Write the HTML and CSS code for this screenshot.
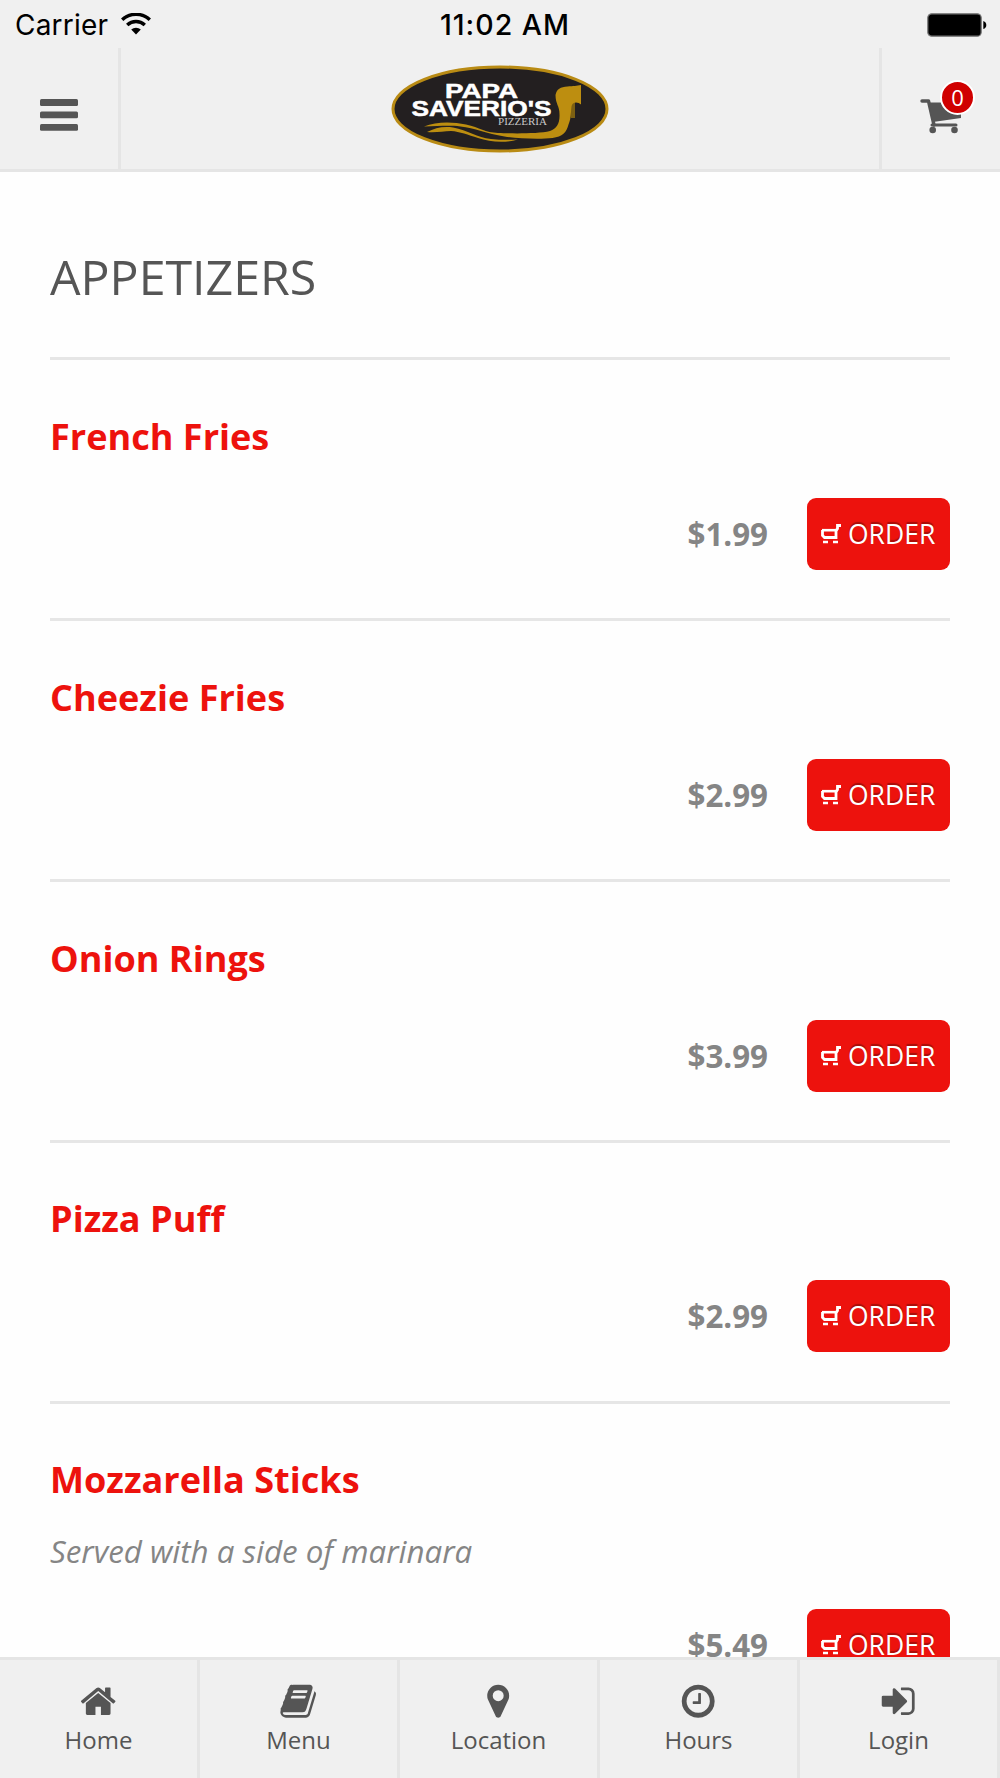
FILE: index.html
```html
<!DOCTYPE html>
<html lang="en">
<head>
    <meta charset="UTF-8">
    <meta name="viewport" content="width=device-width, initial-scale=1.0">
    <title>Papa Saverio's Pizzeria - Appetizers</title>
    <link rel="stylesheet" href="styles.css">
</head>
<body>
    <svg class="sprite" width="0" height="0">
        <symbol id="order-cart" viewBox="0 0 20 20">
            <path d="M1.500 6v5.500l2 2H15V7l1.500-2.500V1.500H20" fill="none" stroke="#fff" stroke-width="2.800"/>
            <path d="M1 6.200h14" stroke="#fff" stroke-width="2.600"/>
            <path d="M2 18h5M12 18h5" stroke="#fff" stroke-width="2.600"/>
        </symbol>
    </svg>

    <header class="top">
        <div class="status">
            <div class="status-left">
                <span class="carrier">Carrier</span>
                <svg class="wifi" width="30" height="22" viewBox="0 0 30 22">
                    <path d="M1.200 6.800a20 20 0 0 1 27.600 0M6.200 12a12.800 12.800 0 0 1 17.600 0" fill="none" stroke="#000" stroke-width="3.400"/>
                    <path d="M10.200 16.600a7 7 0 0 1 9.600 0L15 21.600z"/>
                </svg>
            </div>
            <span class="time">11:02 AM</span>
            <div class="status-right">
                <svg width="60" height="24" viewBox="0 0 60 24">
                    <rect x="0.800" y="0.800" width="53.400" height="22.400" rx="4" fill="#000" stroke="#777" stroke-width="1.200"/>
                    <path d="M56.300 8q3 1 3 4t-3 4z"/>
                </svg>
            </div>
        </div>
        <div class="bar">
            <a class="bar-button">
                <svg width="38" height="32" viewBox="0 0 38 32" fill="#555">
                    <rect y="0" width="38" height="7" rx="1.500"/>
                    <rect y="12.500" width="38" height="6.700" rx="1.500"/>
                    <rect y="25" width="38" height="6.700" rx="1.500"/>
                </svg>
            </a>
            <div class="logo">
                <svg width="218" height="88" viewBox="0 0 218 88">
                    <ellipse cx="109" cy="44" rx="107" ry="42" fill="#231f20" stroke="#b98b14" stroke-width="3"/>
                    <path d="M180 37h4v16h-4z" fill="#7d6012"/>
                    <path d="M33 61.500c12-5 28-5 42-2s19 8 32 8.500 40 1 52-2c7-2 10-8 9.500-17 0-8-4-10-4-19 1-6 5-8 12-8.500 6-.5 9-.5 13.500-1.500v19.500c-3-3-9-3-9.500 2-1 8 0 11-3 18-2 8-6 12-16 13.500-13 1.500-35 .5-48-1.500-18-3-30-8.500-44-10s-22 0-36.500 0z" fill="#bd8e10"/>
                    <path d="M36 67c8-4 16-6 26-4.500 15 3 24 10 38 11.500 9 1 18 1 27 .5-14 4-28 2.500-40-1.500-10-3-18-6.500-27-7-8 0-15 2-24 1z" fill="#bd8e10"/>
                    <g class="logo-name">
                        <text x="54" y="32.700" font-size="21" textLength="73" lengthAdjust="spacingAndGlyphs">PAPA</text>
                        <text x="20.500" y="50.800" font-size="21.500" textLength="140" lengthAdjust="spacingAndGlyphs">SAVERIO'S</text>
                    </g>
                    <text class="logo-sub" x="107" y="60.300" font-size="9.500" textLength="49" lengthAdjust="spacingAndGlyphs">PIZZERIA</text>
                </svg>
            </div>
            <a class="bar-button cart">
                <svg width="42" height="36" viewBox="0 0 42 36">
                    <path d="M2 2h6.500l5.500 24" fill="none" stroke="#555" stroke-width="3.400" stroke-linecap="round" stroke-linejoin="round"/>
                    <path d="M9 3.500h32V19L13 23z" fill="#555"/>
                    <path d="M12 26h24" stroke="#555" stroke-width="3" stroke-linecap="round"/>
                    <circle cx="12.700" cy="31" r="3.300" fill="#555"/>
                    <circle cx="34.500" cy="31" r="3.300" fill="#555"/>
                </svg>
                <span class="badge">0</span>
            </a>
        </div>
    </header>

    <main class="menu">
        <h1>APPETIZERS</h1>
        <section class="item">
            <h2>French Fries</h2>
            <div class="buy">
                <span class="price">$1.99</span>
                <a class="order"><svg width="20" height="20"><use href="#order-cart"/></svg><span>ORDER</span></a>
            </div>
        </section>
        <section class="item">
            <h2>Cheezie Fries</h2>
            <div class="buy">
                <span class="price">$2.99</span>
                <a class="order"><svg width="20" height="20"><use href="#order-cart"/></svg><span>ORDER</span></a>
            </div>
        </section>
        <section class="item">
            <h2>Onion Rings</h2>
            <div class="buy">
                <span class="price">$3.99</span>
                <a class="order"><svg width="20" height="20"><use href="#order-cart"/></svg><span>ORDER</span></a>
            </div>
        </section>
        <section class="item">
            <h2>Pizza Puff</h2>
            <div class="buy">
                <span class="price">$2.99</span>
                <a class="order"><svg width="20" height="20"><use href="#order-cart"/></svg><span>ORDER</span></a>
            </div>
        </section>
        <section class="item">
            <h2>Mozzarella Sticks</h2>
            <p>Served with a side of marinara</p>
            <div class="buy">
                <span class="price">$5.49</span>
                <a class="order"><svg width="20" height="20"><use href="#order-cart"/></svg><span>ORDER</span></a>
            </div>
        </section>
    </main>

    <nav class="tabs">
        <a class="tab">
            <svg viewBox="0 0 1792 1792"><path d="M1472 992v480q0 26-19 45t-45 19h-384v-384h-256v384h-384q-26 0-45-19t-19-45v-480q0-1 .5-3t.5-3l575-474 575 474q1 2 1 6zm223-69l-62 74q-8 9-21 11h-3q-13 0-21-7l-692-577-692 577q-12 8-24 7-13-2-21-11l-62-74q-8-10-7-23.5t11-21.5l719-599q32-26 76-26t76 26l244 204v-195q0-14 9-23t23-9h192q14 0 23 9t9 23v408l219 182q10 8 11 21.5t-7 23.5z"/></svg>
            <span>Home</span>
        </a>
        <a class="tab">
            <svg viewBox="0 0 1792 1792"><path d="M1703 478q40 57 18 129l-275 906q-19 64-76.5 107.500t-122.500 43.500h-923q-77 0-148.500-53.500t-99.500-131.500q-24-67-2-127 0-4 3-27t4-37q1-8-3-21.500t-3-19.500q2-11 8-21t16.500-23.500 16.500-23.500q23-38 45-91.500t30-91.500q3-10 .5-30t-.5-28q3-11 17-28t17-23q21-36 42-92t25-90q1-9-2.500-32t.5-28q4-13 22-30.500t22-22.500q19-26 42.500-84.500t27.500-96.500q1-8-3-25.500t-2-26.500q2-8 9-18t18-23 17-21q8-12 16.500-30.500t15-35 16-36 19.500-32 26.500-23.500 36-11.500 47.500 5.500l-1 3q38-9 51-9h761q74 0 114 56t18 130l-274 906q-36 119-71.500 153.500t-128.500 34.500h-869q-27 0-38 15-11 16-1 43 24 70 144 70h923q29 0 56-15.500t35-41.500l300-987q7-22 5-57 38 15 59 43zm-1064 2q-4 13 2 22.500t20 9.500h608q13 0 25.500-9.500t16.500-22.500l21-64q4-13-2-22.500t-20-9.500h-608q-13 0-25.500 9.500t-16.500 22.500zm-83 256q-4 13 2 22.500t20 9.500h608q13 0 25.500-9.500t16.500-22.500l21-64q4-13-2-22.500t-20-9.500h-608q-13 0-25.500 9.500t-16.500 22.500z"/></svg>
            <span>Menu</span>
        </a>
        <a class="tab">
            <svg viewBox="0 0 1792 1792"><path d="M1152 640q0-106-75-181t-181-75-181 75-75 181 75 181 181 75 181-75 75-181zm256 0q0 109-33 179l-364 774q-16 33-47.500 52t-67.500 19-67.500-19-46.500-52l-365-774q-33-70-33-179 0-212 150-362t362-150 362 150 150 362z"/></svg>
            <span>Location</span>
        </a>
        <a class="tab">
            <svg viewBox="0 0 1792 1792"><path d="M1024 544v448q0 14-9 23t-23 9h-320q-14 0-23-9t-9-23v-64q0-14 9-23t23-9h224v-352q0-14 9-23t23-9h64q14 0 23 9t9 23zm416 352q0-148-73-273t-198-198-273-73-273 73-198 198-73 273 73 273 198 198 273 73 273-73 198-198 73-273zm224 0q0 209-103 385.500t-279.500 279.500-385.500 103-385.500-103-279.500-279.500-103-385.500 103-385.500 279.500-279.500 385.500-103 385.500 103 279.500 279.500 103 385.500z"/></svg>
            <span>Hours</span>
        </a>
        <a class="tab">
            <svg viewBox="0 0 1792 1792"><path d="M1312 896q0 26-19 45l-544 544q-19 19-45 19t-45-19-19-45v-288h-448q-26 0-45-19t-19-45v-384q0-26 19-45t45-19h448v-288q0-26 19-45t45-19 45 19l544 544q19 19 19 45zm352-352v704q0 119-84.500 203.500t-203.500 84.500h-320q-13 0-22.500-9.500t-9.500-22.500q0-4-1-20t-.5-26.500 3-23.500 10-19.500 20.500-6.500h320q66 0 113-47t47-113v-704q0-66-47-113t-113-47h-312l-11.500-1-11.500-3-8-5.500-7-9-2-13.500q0-4-1-20t-.5-26.500 3-23.500 10-19.500 20.500-6.500h320q119 0 203.500 84.500t84.500 203.500z"/></svg>
            <span>Login</span>
        </a>
    </nav>
</body>
</html>
```

FILE: styles.css
```css
* {
    box-sizing: border-box;
}
body {
    display: flex;
    flex-direction: column;
    height: 1778px;
    margin: 0;
    overflow: hidden;
    font-family: "Open Sans", sans-serif;
    color: #555;
    background-color: #fefefe;
}
h1, h2, p {
    margin: 0;
}
svg {
    display: block;
    flex: none;
}
.sprite {
    position: absolute;
}

/* header */
.top {
    flex: none;
    height: 172px;
    background-color: #f0f0f0;
    border-bottom: 3px solid #e5e5e5;
}
.status {
    display: grid;
    grid-template-columns: 1fr auto 1fr;
    align-items: center;
    height: 48px;
    padding: 1px 13px 0 15px;
    font-family: Inter, sans-serif;
    font-size: 28px;
    line-height: 46px;
    color: #000;
}
.status-left {
    display: flex;
    align-items: center;
    gap: 13px;
}
.carrier {
    padding-top: 1px;
    letter-spacing: 0.2px;
}
.wifi {
    margin-bottom: 2px;
}
.time {
    padding: 1px 0 0 8px;
    font-weight: 500;
    font-size: 28.500px;
    letter-spacing: 1px;
}
.status-right {
    display: flex;
    justify-content: flex-end;
}
.bar {
    display: flex;
    height: 121px;
}
.bar-button {
    width: 121px;
    padding: 51px 0 0 40px;
    border-right: 3px solid #e5e5e5;
}
.logo {
    flex: 1;
    display: flex;
    justify-content: center;
    padding-top: 17px;
}
.logo-name {
    font-family: "Liberation Sans", sans-serif;
    font-weight: bold;
    fill: #fff;
    stroke: #fff;
    stroke-width: 0.5px;
}
.logo-sub {
    font-family: "Liberation Serif", serif;
    fill: #c8c8c8;
}
.cart {
    position: relative;
    border-right: none;
    border-left: 3px solid #e5e5e5;
    padding-left: 38px;
}
.badge {
    position: absolute;
    left: 58px;
    top: 32px;
    width: 35px;
    height: 35px;
    border: 2px solid #fff;
    border-radius: 50%;
    background-color: #d00000;
    color: #fff;
    font-size: 22px;
    line-height: 31px;
    text-align: center;
}

/* menu list */
.menu {
    flex: 1;
    min-height: 0;
    overflow: hidden;
    padding: 0 50px;
}
h1 {
    height: 185.300px;
    padding-top: 69px;
    font-size: 48.300px;
    font-weight: 400;
    line-height: 70px;
}
.item {
    height: 260.900px;
    padding-top: 50.500px;
    border-top: 3px solid #e6e6e6;
}
.item h2 {
    font-size: 36.100px;
    font-weight: 700;
    line-height: 50px;
    color: #ed120d;
}
.item p {
    margin: 24.500px 0 -1px;
    font-size: 31.300px;
    font-style: italic;
    line-height: 44px;
    color: #858585;
}
.buy {
    display: flex;
    justify-content: flex-end;
    align-items: center;
    gap: 39px;
    margin-top: 37px;
}
.price {
    font-size: 31.300px;
    font-weight: 700;
    color: #858585;
}
.order {
    display: flex;
    align-items: center;
    gap: 7px;
    width: 143px;
    height: 72px;
    padding-left: 14px;
    border-radius: 9px;
    background-color: #ed120d;
    color: #fff;
    font-size: 26.500px;
    text-shadow: 0 -2px 1px rgba(0, 0, 0, 0.3);
}

/* bottom tabs */
.tabs {
    display: flex;
    flex: none;
    height: 121px;
    background-color: #f0f0f0;
    border-top: 3px solid #e5e5e5;
}
.tab {
    display: flex;
    flex-direction: column;
    align-items: center;
    width: 200px;
    padding-top: 22px;
    border-right: 3px solid #e5e5e5;
    font-size: 24px;
    line-height: 34px;
}
.tab svg {
    width: 38.400px;
    height: 38.400px;
    margin-bottom: 3px;
    fill: #555;
}
```
